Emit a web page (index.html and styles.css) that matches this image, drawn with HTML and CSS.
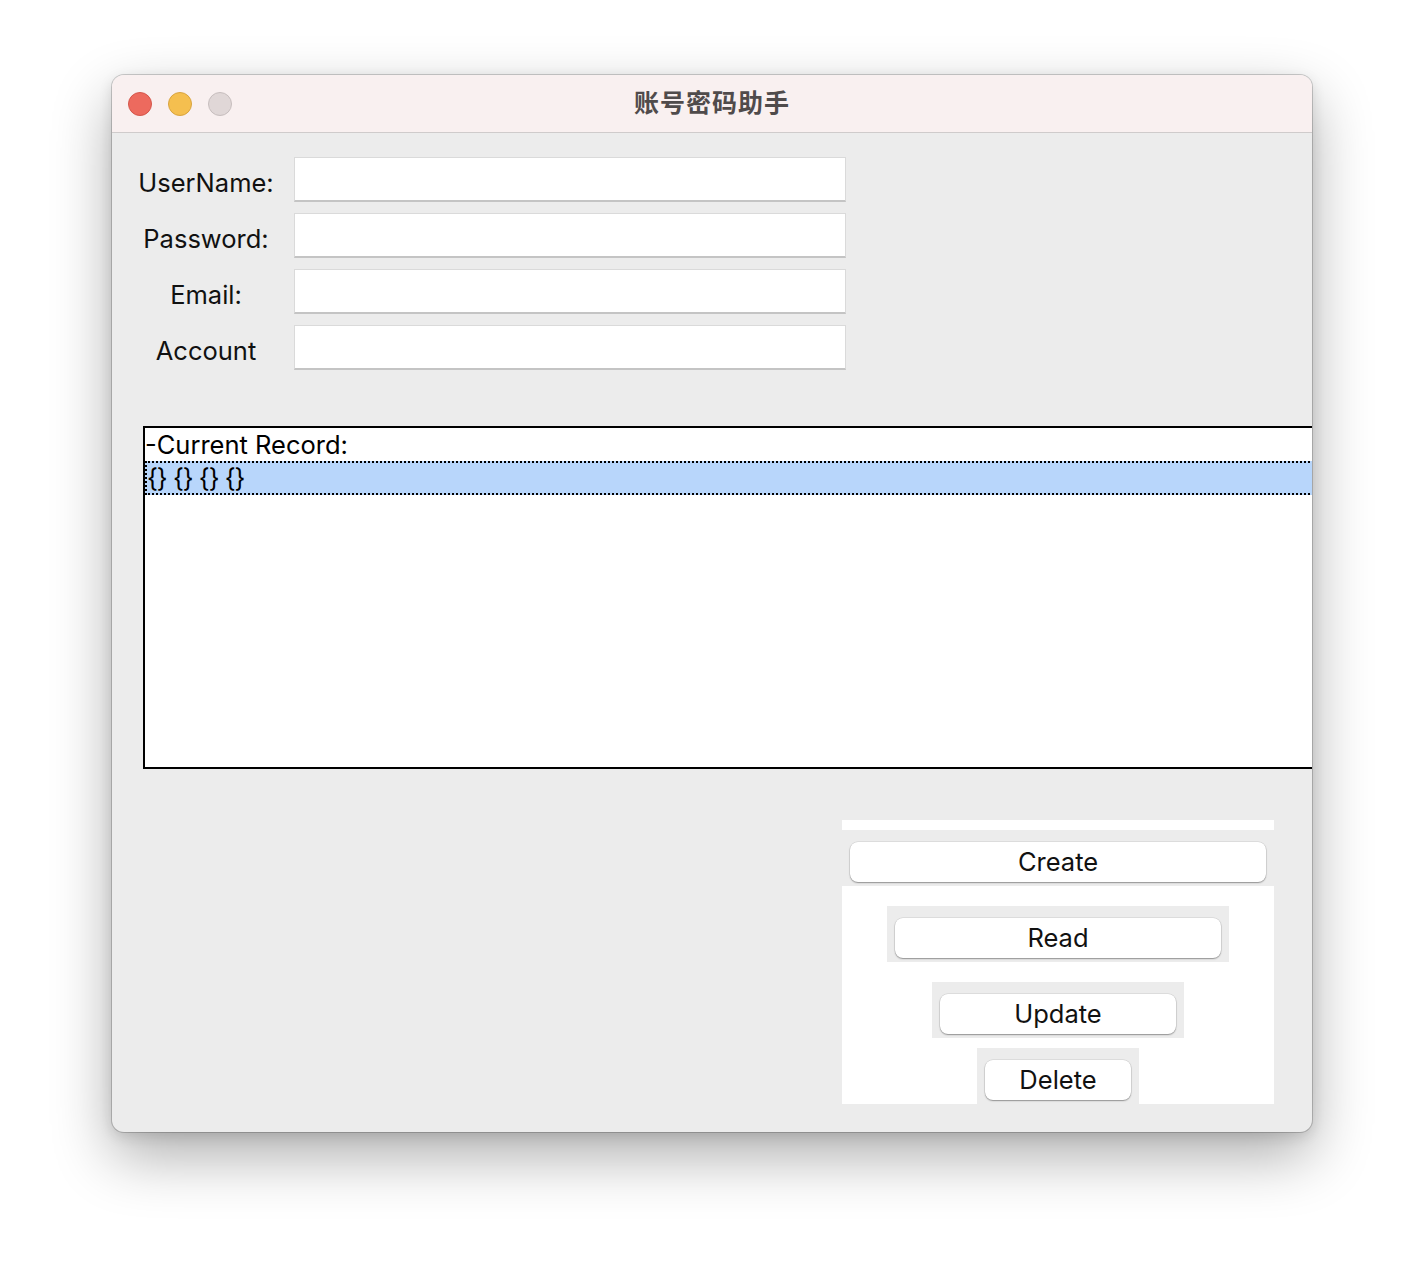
FILE: index.html
```html
<!DOCTYPE html>
<html lang="zh">
<head>
<meta charset="utf-8">
<title>账号密码助手</title>
<link rel="stylesheet" href="styles.css">
</head>
<body>
<div class="stage">
  <div class="window">
    <div class="titlebar">
      <div class="lights">
        <span class="light red"></span>
        <span class="light yellow"></span>
        <span class="light gray"></span>
      </div>
      <div class="title">账号密码助手</div>
    </div>
    <div class="content">
      <div class="form">
        <label class="label">UserName:</label>
        <div class="input"></div>
        <label class="label">Password:</label>
        <div class="input"></div>
        <label class="label">Email:</label>
        <div class="input"></div>
        <label class="label">Account</label>
        <div class="input"></div>
      </div>
      <div class="listbox">
        <div class="list-row">-Current Record:</div>
        <div class="list-row selected">{} {} {} {}</div>
      </div>
      <div class="panel-wrap">
        <div class="panel">
          <div class="btn-cell w-create"><button class="btn">Create</button></div>
          <div class="btn-cell w-read"><button class="btn">Read</button></div>
          <div class="btn-cell w-update"><button class="btn">Update</button></div>
          <div class="btn-cell w-delete"><button class="btn">Delete</button></div>
        </div>
      </div>
    </div>
  </div>
</div>
</body>
</html>
```
FILE: styles.css
```css
html, body {
  margin: 0;
  padding: 0;
  background: #ffffff;
}
.stage {
  width: 1424px;
  height: 1280px;
  padding-top: 75px;
  box-sizing: border-box;
  display: flex;
  justify-content: center;
  align-items: flex-start;
  font-family: Inter, "Noto Sans", sans-serif;
}
.window {
  width: 1200px;
  height: 1057px;
  border-radius: 12px;
  overflow: hidden;
  background: #ececec;
  box-shadow: 0 0 0 1px rgba(0,0,0,0.18), 0 24px 60px rgba(0,0,0,0.32), 0 4px 14px rgba(0,0,0,0.12);
  display: flex;
  flex-direction: column;
}
.titlebar {
  height: 58px;
  flex: none;
  box-sizing: border-box;
  background: #f9f0f0;
  border-bottom: 1px solid #cfcbcb;
  position: relative;
  display: flex;
  align-items: center;
  justify-content: center;
}
.lights {
  position: absolute;
  left: 16px;
  top: 17px;
  display: flex;
  gap: 16px;
}
.light {
  width: 24px;
  height: 24px;
  border-radius: 50%;
  box-sizing: border-box;
}
.red { background: #ed6a5e; border: 1px solid #d5564b; }
.yellow { background: #f5bf4f; border: 1px solid #d9a43f; }
.gray { background: #e0d7d7; border: 1px solid #c7bebe; }
.title {
  font-family: "Noto Sans CJK SC", sans-serif;
  font-size: 25px;
  font-weight: 700;
  color: #504b4b;
  letter-spacing: 1px;
  line-height: 30px;
  margin-bottom: 6px;
}
.content {
  flex: 1;
  display: flex;
  flex-direction: column;
  padding-top: 24px;
}
.form {
  display: grid;
  grid-template-columns: 156px 552px;
  column-gap: 10px;
  row-gap: 11px;
  padding-left: 16px;
}
.label {
  font-size: 25.5px;
  color: #111;
  text-align: center;
  line-height: 45px;
  height: 45px;
  padding-top: 3px;
  box-sizing: border-box;
}
.input {
  height: 45px;
  box-sizing: border-box;
  background: #fff;
  border: 1px solid #dadada;
  border-bottom: 2px solid #c4c4c4;
}
.listbox {
  margin-top: 56px;
  margin-left: 31px;
  width: 1200px;
  height: 343px;
  flex: none;
  box-sizing: border-box;
  background: #fff;
  border: 2px solid #000;
  font-size: 25.5px;
  color: #000;
}
.list-row {
  height: 33px;
  line-height: 33px;
  white-space: nowrap;
}
.list-row.selected {
  height: 34px;
  background: #b8d6fb;
  border-top: 2px dotted #000;
  border-bottom: 2px dotted #000;
  border-left: 2px dotted #000;
  box-sizing: border-box;
  line-height: 30px;
  letter-spacing: -1px;
}
.panel-wrap {
  margin-top: 51px;
  padding-left: 730px;
}
.panel {
  width: 432px;
  height: 284px;
  box-sizing: border-box;
  background: #fff;
  padding-top: 10px;
  display: flex;
  flex-direction: column;
  align-items: center;
}
.btn-cell {
  background: #ececec;
  box-sizing: border-box;
  padding: 12px 8px 4px;
  height: 56px;
}
.w-create { width: 432px; }
.w-read { width: 342px; margin-top: 20px; }
.w-update { width: 252px; margin-top: 20px; }
.w-delete { width: 162px; margin-top: 10px; }
.btn {
  display: block;
  width: 100%;
  height: 40px;
  border: none;
  border-radius: 8px;
  background: #fff;
  box-shadow: 0 1px 1.5px rgba(0,0,0,0.35), 0 0 0 0.5px rgba(0,0,0,0.12);
  font-family: Inter, "Noto Sans", sans-serif;
  font-size: 25.5px;
  color: #111;
  padding: 0;
  line-height: 40px;
}
```
